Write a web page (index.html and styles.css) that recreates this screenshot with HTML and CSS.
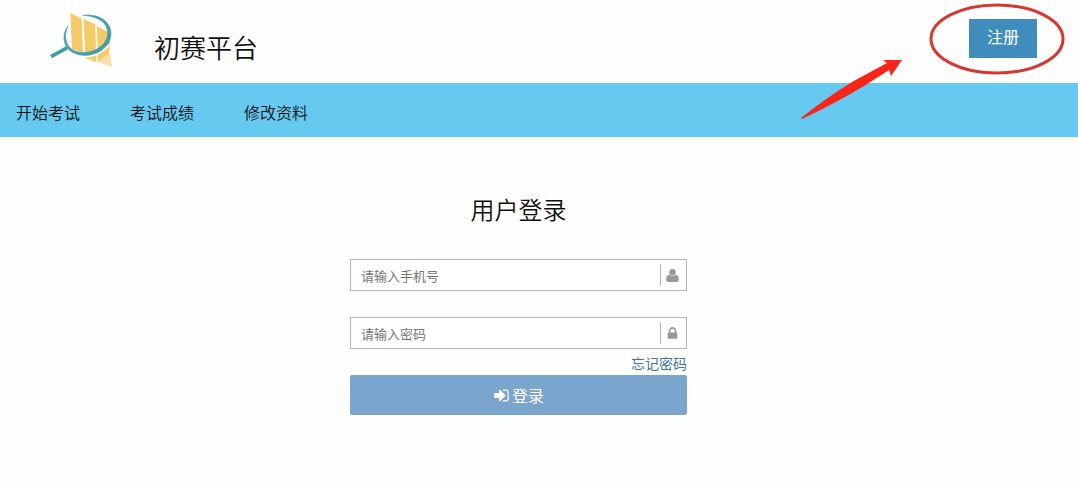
FILE: index.html
```html
<!doctype html>
<html lang="zh-CN">
<head>
  <meta charset="UTF-8" />
  <meta name="viewport" content="width=device-width, initial-scale=1.0" />
  <title>初赛平台</title>
  <link rel="stylesheet" href="styles.css">
</head>
<body>
  <header class="header">
    <svg class="logo" viewBox="0 0 270 240" aria-hidden="true">
      <g fill="#f5ca69">
        <path d="M91 39L125 56L129 160L96 146Z" />
        <path d="M131 57L166 73L169 187L136 175Z" />
        <path d="M171 79L211 99L207 177L173 187Z" />
      </g>
      <path d="M173 186L211 158L216 201Z" fill="#f7dfaa" />
      <path d="M94 157Q150 186 206 136" fill="none" stroke="#fefefe" stroke-width="9" />
      <path d="M84 78C64 104 68 144 104 160C144 177 198 157 211 116C222 72 184 40 130 46C181 50 211 73 201 113C189 148 141 167 105 153C74 140 71 104 84 78Z" fill="#429eaa" stroke="#429eaa" stroke-width="2" />
      <path d="M82 143L33 170" stroke="#429eaa" stroke-width="11" />
    </svg>
    <h1 class="site-name">初赛平台</h1>
    <button class="register-btn" type="button">注册</button>
    <svg class="callout" viewBox="0 0 280 124" aria-hidden="true">
      <path d="M3 118Q28 98 54 82L89 63L85 60L104 60L93 76L91 70L66 86Q36 104 4 119Z" fill="#fb2418" />
      <ellipse cx="199" cy="39" rx="66" ry="34" fill="none" stroke="#d9362e" stroke-width="3" />
    </svg>
  </header>

  <nav class="nav">
    <a href="#">开始考试</a>
    <a href="#">考试成绩</a>
    <a href="#">修改资料</a>
  </nav>

  <main class="main">
    <form class="login">
      <h2 class="login-title">用户登录</h2>
      <div class="field">
        <input id="phone" type="text" placeholder="请输入手机号" aria-label="请输入手机号" />
        <label class="field-icon" for="phone">
          <svg viewBox="0 0 14 14" aria-hidden="true">
            <circle cx="7" cy="4" r="3" />
            <path d="M4 6Q1 7 1 11Q1 13 3 13H11Q13 13 13 11Q13 7 10 6Q7 9 4 6Z" />
          </svg>
        </label>
      </div>
      <div class="field">
        <input id="password" type="password" placeholder="请输入密码" aria-label="请输入密码" />
        <label class="field-icon" for="password">
          <svg viewBox="0 0 1792 1792" aria-hidden="true"><path d="M640 768h512v-192q0-106-75-181t-181-75-181 75-75 181v192zm832 96v576q0 40-28 68t-68 28h-960q-40 0-68-28t-28-68v-576q0-40 28-68t68-28h32v-192q0-184 132-316t316-132 316 132 132 316v192h32q40 0 68 28t28 68z" /></svg>
        </label>
      </div>
      <a class="forgot" href="#">忘记密码</a>
      <button class="login-btn" type="button">
        <svg viewBox="0 0 1792 1792" aria-hidden="true"><path d="M1312 896q0 26-19 45l-544 544q-19 19-45 19t-45-19-19-45v-288h-448q-26 0-45-19t-19-45v-384q0-26 19-45t45-19h448v-288q0-26 19-45t45-19 45 19l544 544q19 19 19 45zm352-352v704q0 119-84.500 203.500t-203.500 84.500h-320q-13 0-22.500-9.500t-9.500-22.500q0-4-1-20t-.5-26.500 3-23.500 10-19.500 20.500-6.500h320q66 0 113-47t47-113v-704q0-66-47-113t-113-47h-312l-11.500-1-11.500-3-8-5.500-7-9-2-13.500q0-4-1-20t-.5-26.500 3-23.500 10-19.500 20.500-6.500h320q119 0 203.500 84.500t84.500 203.500z" /></svg>
        登录
      </button>
    </form>
  </main>
</body>
</html>
```

FILE: styles.css
```css
:root {
  --nav: #66c9f0;
  --primary: #3f8dbc;
  --login: #7aa5cc;
  --line: #b5b5b5;
  --icon: #999;
}

* { box-sizing: border-box; }

body {
  margin: 0;
  font-family: "Noto Sans CJK SC", sans-serif;
  font-size: 16px;
  color: #111;
  background: #fefefe;
}

button, input {
  font: inherit;
}

a {
  color: inherit;
  text-decoration: none;
}

.header {
  position: relative;
  display: flex;
  align-items: flex-start;
  padding: 0 41px 3px 40px;
}

.logo {
  width: 90px;
  height: 80px;
}

.site-name {
  margin: 27px auto 0 24px;
  font-size: 26px;
  font-weight: 350;
  line-height: 40px;
}

.register-btn {
  margin-top: 19px;
  padding: 5px 18px 10px;
  border: 0;
  background: var(--primary);
  color: #fff;
  line-height: 24px;
  cursor: pointer;
}

/* red circle and arrow pointing at the register button */
.callout {
  position: absolute;
  top: 0;
  right: 0;
  width: 280px;
  height: 124px;
  pointer-events: none;
}

.nav {
  display: flex;
  gap: 50px;
  padding: 17px 16px 13px;
  background: var(--nav);
  font-weight: 350;
  line-height: 24px;
}

.main {
  display: flex;
  justify-content: center;
  padding: 54px 41px 56px 0;
}

.login {
  display: flex;
  flex-direction: column;
  width: 100%;
  max-width: 337px;
}

.login-title {
  margin: 0 0 32px;
  font-size: 24px;
  font-weight: 350;
  line-height: 36px;
  text-align: center;
}

.field {
  display: flex;
  align-items: center;
  height: 32px;
  margin-bottom: 26px;
  border: 1px solid var(--line);
  background: #fff;
}

.field + .field { margin-bottom: 4px; }

.field input {
  flex: 1;
  min-width: 0;
  padding: 0 10px;
  border: 0;
  outline: none;
  background: none;
  font-size: 13px;
}

.field input::placeholder {
  color: #757575;
  opacity: 1;
}

.field-icon {
  display: flex;
  align-items: center;
  justify-content: center;
  width: 26px;
  height: 22px;
  padding-right: 2px;
  border-left: 1px solid var(--line);
}

.field-icon svg {
  width: 15px;
  height: 15px;
  fill: var(--icon);
}

.forgot {
  align-self: flex-end;
  margin-bottom: 2px;
  color: #3f7898;
  font-size: 14px;
  line-height: 20px;
}

.login-btn {
  display: flex;
  align-items: center;
  justify-content: center;
  gap: 2px;
  height: 40px;
  border: 0;
  border-radius: 2px;
  background: var(--login);
  color: #fff;
  cursor: pointer;
}

.login-btn svg {
  width: 17px;
  height: 17px;
  fill: currentColor;
}
```
